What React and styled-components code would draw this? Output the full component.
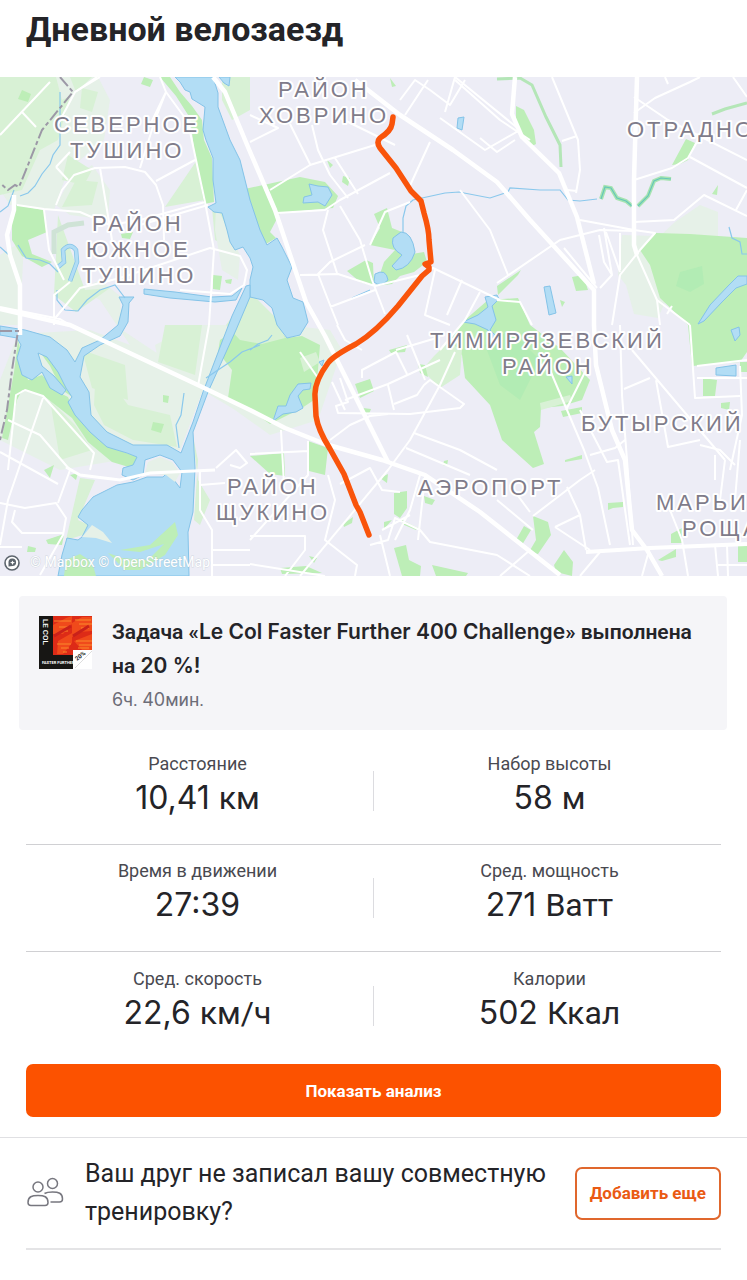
import React from "react";
import styled, { createGlobalStyle } from "styled-components";

const GlobalStyle = createGlobalStyle`
  * {
    box-sizing: border-box;
  }
  body {
    margin: 0;
    background: #fff;
    color: #242428;
    font-family: Roboto, "Noto Sans", sans-serif;
  }
`;

const Page = styled.main`
  display: flex;
  flex-direction: column;
  min-height: 100vh;
`;

const Title = styled.h1`
  margin: 0;
  padding: 7px 26px 26px;
  font-size: 34px;
  line-height: 44px;
  font-weight: 700;
`;

const Map = styled.svg`
  display: block;
  width: 100%;
  height: auto;
  background: #ededf6;

  .park {
    fill: #bdeeb7;
  }
  .green {
    fill: #d8f1d5;
  }
  .pale {
    fill: #e6f1e8;
  }
  .water {
    fill: #b2ddf5;
    stroke: #84c3e8;
    stroke-width: 1;
  }
  .stream {
    fill: none;
    stroke: #8ac8ec;
    stroke-width: 1.2;
  }
  .road {
    fill: none;
    stroke: #fff;
    stroke-width: 2;
    stroke-linejoin: round;
  }
  .highway {
    fill: none;
    stroke: #fff;
    stroke-width: 4.5;
    stroke-linejoin: round;
  }
  .border {
    fill: none;
    stroke: #9c98a6;
    stroke-width: 2;
    stroke-dasharray: 12 3 4 3;
  }
  .track {
    fill: none;
    stroke: #f9540b;
    stroke-width: 5.5;
    stroke-linecap: round;
    stroke-linejoin: round;
  }
`;

const District = styled.text`
  font-family: "Liberation Sans", Arial, sans-serif;
  font-size: 22px;
  letter-spacing: 3px;
  fill: #7f7c8a;
  stroke: #fff;
  stroke-width: 4px;
  stroke-linejoin: round;
  paint-order: stroke;
`;

const Credits = styled.text`
  font-size: 14px;
  fill: #fff;
  stroke: #a5b5c0;
  stroke-width: 1px;
  stroke-opacity: 0.4;
  paint-order: stroke;
`;

const Challenge = styled.section`
  display: flex;
  gap: 20px;
  margin: 20px 20px 0 19px;
  padding: 20px 20px 13px;
  border-radius: 4px;
  background: #f5f5f8;
`;

const Badge = styled.svg`
  flex: none;
  width: 53px;
  height: 53px;
`;

const ChallengeText = styled.div`
  flex: 1;
  margin-top: -1px;
`;

const ChallengeTitle = styled.h2`
  margin: 0;
  font-size: 21px;
  line-height: 34px;
  font-weight: 600;
`;

const Latin = styled.span`
  font-family: Inter, sans-serif;
`;

const ChallengeTime = styled.p`
  margin: 0;
  font-size: 18px;
  line-height: 34px;
  color: #6d6d78;
`;

const Stats = styled.div`
  padding: 8px 26px 0;
`;

const StatRow = styled.div`
  display: grid;
  grid-template-columns: 1fr 1px 1fr;
  column-gap: 4px;
  align-items: center;
  height: 107px;
  border-bottom: ${(props) => (props.$last ? "none" : "1px solid #d0d0d3")};
`;

const StatDivider = styled.div`
  height: 40px;
  background: #dcdce0;
`;

const Stat = styled.div`
  padding-bottom: 10px;
  text-align: center;
`;

const StatLabel = styled.div`
  font-size: 18px;
  line-height: 24px;
  color: #494950;
`;

const StatValue = styled.div`
  font-size: 32px;
  line-height: 44px;
`;

const AnalysisButton = styled.button`
  margin: 5px 26px 20px;
  height: 53px;
  border: none;
  border-radius: 7px;
  background: #fc5200;
  color: #fff;
  font-family: inherit;
  font-size: 17px;
  font-weight: 700;
  cursor: pointer;
`;

const FriendBar = styled.section`
  padding: 0 26px;
  border-top: 1px solid #e0e0e3;
`;

const FriendRow = styled.div`
  display: flex;
  align-items: center;
  height: 112px;
  border-bottom: 2px solid #e4e4e6;
`;

const FriendsIcon = styled.svg`
  flex: none;
  width: 38px;
  height: 32px;
  margin-right: 21px;
  fill: none;
  stroke: #77777f;
  stroke-width: 1.5;
`;

const FriendText = styled.p`
  flex: 1;
  margin: 0;
  font-size: 25px;
  line-height: 38px;
`;

const AddButton = styled.button`
  flex: none;
  height: 53px;
  padding: 0 13px;
  border: 2px solid #e0672d;
  border-radius: 7px;
  background: #fff;
  color: #ea5a13;
  font-family: inherit;
  font-size: 17px;
  font-weight: 700;
  cursor: pointer;
`;

const districts = [
  { x: 278, y: 97, name: "РАЙОН" },
  { x: 259, y: 123, name: "ХОВРИНО" },
  { x: 54, y: 132, name: "СЕВЕРНОЕ" },
  { x: 70, y: 158, name: "ТУШИНО" },
  { x: 92, y: 231, name: "РАЙОН" },
  { x: 86, y: 257, name: "ЮЖНОЕ" },
  { x: 82, y: 283, name: "ТУШИНО" },
  { x: 627, y: 137, name: "ОТРАДНО" },
  { x: 430, y: 348, name: "ТИМИРЯЗЕВСКИЙ" },
  { x: 502, y: 374, name: "РАЙОН" },
  { x: 581, y: 431, name: "БУТЫРСКИЙ" },
  { x: 227, y: 494, name: "РАЙОН" },
  { x: 216, y: 520, name: "ЩУКИНО" },
  { x: 418, y: 495, name: "АЭРОПОРТ" },
  { x: 656, y: 510, name: "МАРЬИ" },
  { x: 682, y: 536, name: "РОЩА" },
];

const stats = [
  [
    { label: "Расстояние", value: "10,41", unit: "км" },
    { label: "Набор высоты", value: "58", unit: "м" },
  ],
  [
    { label: "Время в движении", value: "27:39" },
    { label: "Сред. мощность", value: "271", unit: "Ватт" },
  ],
  [
    { label: "Сред. скорость", value: "22,6", unit: "км/ч" },
    { label: "Калории", value: "502", unit: "Ккал" },
  ],
];

const Parks = () => (
  <g>
    <path className="pale" d="M0 77H98L110 100 104 140 68 170 54 210 10 205 0 190z M70 180L92 165 110 190 108 220 70 215 56 205z" />
    <path className="green" d="M0 77H56L62 100 70 96 58 140 40 150 22 190 0 195z M70 77H92L76 92z M82 88L98 92 92 112 80 108z M68 155L92 170 84 185 62 180z M76 180L98 182 92 205 62 207z" />
    <path className="pale" d="M0 255L24 240 20 325 0 325z M18 334L90 330 130 345 100 300 80 290 100 280 120 296 122 330 205 385 180 450 60 470 0 440V380z" />
    <path className="green" d="M165 207L197 160 205 200z M222 77H250V110L232 120 222 100z M235 250L222 213 212 208 215 240z" />
    <path className="pale" d="M216 205L240 255 238 280 222 270 215 230z M194 325H285L330 330 342 350 318 420 270 435 235 410 202 390 160 370 155 345z" />
    <path className="green" d="M58 215L54 295 76 312 110 288 85 290z M95 385L108 378 128 405 170 415 177 447 133 440 104 425 94 405z M82 350L125 365 128 400 92 388z M165 325L202 325 195 375 158 362z M50 400L75 425 92 450 60 460z" />
    <path className="park" d="M160 77L170 77 180 92 192 106 202 120 204 140 212 158 214 202 204 204 194 148 190 118 176 96z M144 77L153 80 150 87 141 84z M22 90L31 94 28 102 18 99z M16 205L44 210 47 232 28 240 32 254 52 262 42 267 22 256 12 240 12 222z" />
    <path className="park" d="M18 340L28 380 42 375 58 392 68 397 75 414 106 446 138 457 132 468 112 462 88 442 72 418 44 396 22 390 17 400 8 440 2 438 14 372z M40 352L56 364 72 384 71 396 62 390 50 366z M213 275L222 276 220 290 213 289z M225 280L232 279 231 284 226 283z M121 234L133 232 130 239 122 238z" />
    <path className="park" d="M235 330L262 318 276 326 286 338 302 336 320 345 318 370 314 400 302 408 270 424 250 410 228 398 232 370 218 352 220 340z" />
    <path className="green" d="M226 325L250 292 275 317 285 338 262 344 240 340z M300 358L316 352 320 362 304 372z" />
    <path className="park" d="M240 190L268 184 300 177 325 182 338 196 333 208 280 213 270 232 276 238 266 244 258 228z M327 160L333 165 330 168z M343 176L350 178 348 186 342 182z M390 78L396 86 392 87z" />
    <path className="park" d="M347 271L366 260 373 263 374 286 360 282z M374 214L387 208 392 228 402 232 412 254 424 252 427 262 414 272 400 276 392 284 376 286 384 262 395 250 370 245 380 228z M516 106L524 110 534 130 536 144 530 147 516 128z" />
    <path className="park" d="M672 165L686 139 695 143 688 160 680 164z M712 194L718 185 717 195z M572 277L583 275 588 290 576 291z M560 300L565 302 562 307z M497 286L521 270 518 275 498 295z" />
    <path className="pale" d="M675 222L700 205 718 212 718 236 660 236z M655 236L645 250 660 285 666 300 658 318 634 314 626 285 618 275 622 235z" />
    <path className="park" d="M656 233L690 234 747 238V352L740 362 692 366 688 325 660 298 650 265 640 250z M465 320L488 300 518 298 530 325 560 348 590 380 582 400 562 406 541 408 540 427 534 432 544 464 533 468 502 440 490 405 465 378 462 355 448 342z" />
    <path className="green" d="M448 342L462 350 460 375 440 388 422 370 434 356z M540 403L570 395 572 401 541 410z" />
    <path d="M680 272L702 266 704 284 690 292 676 286z M485 345L510 330 540 360 520 400 500 385z" fill="#b2ecb4" />
    <path className="park" d="M561 411L582 407 582 413 563 417z M565 460L582 455 582 459 565 462z M608 503L623 502 623 507 613 508 608 510z M703 378L717 380 715 396 703 396z M721 403L730 402 729 410 721 408z M740 362H747V372H740z" />
    <path className="park" d="M355 384L370 379 374 391 360 398z M363 408L371 409 369 414 364 414z M389 350L407 345 405 352 391 353z M418 364L425 365 428 377 420 373z M444 461L448 460 447 466 443 465z M380 478L388 474 387 483z M308 441L328 448 325 475 309 471z M250 456L284 453 285 476 270 474z" />
    <path className="park" d="M394 493L407 491 407 508 400 518 394 514z M424 496L435 500 432 505 425 503z M384 522L392 520 384 529z M343 524L353 517 352 523 344 527z M402 520L418 528 416 530 402 524z M394 548L406 545 409 560 421 566 420 576 402 576z M432 565L468 573 466 576H436z M280 568L306 566 322 573 282 574z M309 556L317 558 314 563z" />
    <path className="park" d="M516 540L524 526 531 530 522 545z M533 516L548 522 551 535 538 554 529 552 536 540z M554 565L564 550 573 562 572 576 556 572z M671 534L682 528 682 543 671 543z M658 560L676 549 676 557 662 561z M738 545H747V562H738z M44 470L54 465 50 478z M46 540L64 534 62 545 48 544z M28 546L36 548 35 552 27 552z M70 475L78 473 76 480z M163 395L169 396 168 403 163 402z M153 422L164 424 161 433 151 430z" />
    <path className="green" d="M80 478L95 480 78 520 100 530 66 540 75 500z M192 432L198 460 194 520 200 525 210 500 198 480z" />
  </g>
);

const Water = () => (
  <g>
    <path
      className="water"
      d="M175 77L180 82 185 90 190 92 192 99 197 102 205 107 203 130 206 140 213 158 213 180 216 203 208 207 214 212 222 213 227 230 230 242 235 250 243 247 250 258 253 267 250 280 250 297 263 300 272 308 277 325 287 338 300 335 308 322 303 302 293 298 287 280 292 267 282 247 277 238 267 245 260 230 250 200 240 160 230 140 218 107 218 93 213 77z"
    />
    <path className="water" d="M219 77H230L229 86 224 83z" />
    <path
      className="water"
      d="M0 326L25 330 50 337 67 350 75 362 82 348 100 340 118 325 123 305 119 297 134 297 129 303 128 322 120 336 100 345 84 356 80 377 89 392 91 415 107 432 133 445 167 445 181 453 193 422 203 392 222 342 232 316 246 286 250 285 250 297 236 330 208 392 193 432 195 468 193 512 188 532 189 576H58L62 555 67 538 78 540 82 537 88 525 78 517 82 510 93 497 117 485 133 482 147 477 163 477 168 472 180 488 182 472 173 460 160 455 145 460 143 475 133 480 122 475 123 468 133 465 137 457 127 453 107 447 90 432 75 415 68 402 72 397 66 388 58 372 47 357 38 353 42 366 54 376 66 390 62 395 50 388 42 372 32 380 22 375 17 358 21 345 17 338 0 335z"
    />
    <path className="water" d="M144 289L175 292 212 297 232 296 242 288 236 300 215 302 170 298 144 294z" />
    <path className="water" d="M401 232Q412 232 415 252Q410 268 396 270L392 266 402 255Q390 248 393 238z M375 274Q386 268 388 280Q380 288 374 282z" />
    <path className="water" d="M309 184L318 186 328 187 332 195 325 206 318 202 303 203 304 197 312 195z" />
    <path className="water" d="M485 297L497 295 499 299 492 306 496 320 490 330 497 337 490 340 488 330 475 324 463 322 478 315 488 307z M544 287L550 286 556 313 549 315z M458 118L464 117 462 130 457 128z" />
    <path className="water" d="M747 276L738 276 728 286 710 305 698 324 704 321 722 302 736 288 747 284z M731 330L739 327 740 335 735 341z M716 368L736 365 736 376 716 375z M566 377L572 376 572 384z" />
    <path className="water" d="M311 383L298 384 290 395 286 406 278 406 273 421 283 414 296 412 303 408 298 396 303 390 310 389z M319 362L324 360 322 366z" />
    <path className="park" d="M120 550L150 545 175 522 178 535 165 555 140 570 125 570 108 553 122 558 148 560 164 544 140 552z M66 560L80 554 92 562 96 576H64z" />
    <path className="pale" d="M145 473L148 462 160 457 172 462 180 473 175 482 166 475z M82 537L92 525 103 532 112 543 96 538z" />
    <path className="stream" d="M60 92L60 145 53 155 50 164 42 174 35 186 28 193 20 196M0 212L8 206 14 190" />
    <path className="stream" d="M0 247L9 255M403 232L403 218 406 206 413 200 445 193 459 192 490 198 508 192 510 188 540 190 560 190 568 200 580 201 597 199" />
    <path className="stream" d="M18 245L26 258 40 260 50 264 58 272M57 290L57 300 65 310 78 311 87 300 100 290 115 285 125 298" />
    <path d="M58 267L64 262 63 250Q70 242 76 250L77 262 70 281" fill="none" stroke="#84c3e8" strokeWidth="4.500" />
    <path d="M58 267L64 262 63 250Q70 242 76 250L77 262 70 281" fill="none" stroke="#b2ddf5" strokeWidth="3" />
    <path className="stream" d="M250 350L258 344 268 340 272 335M206 378L230 362 242 352 260 345M184 393L181 415 176 425 179 448M729 227L732 238 740 242 742 254H747M352 298L370 290" />
    <path d="M601 199L605 187 611 188 617 198 626 201 632 206M638 206L648 196 654 181 661 178 671 179" fill="none" stroke="#a6e4b0" strokeWidth="4" />
    <path d="M601 199L605 187 611 188 617 198 626 201 632 206M638 206L648 196 654 181 661 178 671 179" fill="none" stroke="#66c6ba" strokeWidth="1.2" />
    <path d="M497 79L520 78 532 85 546 117 560 145 561 167M712 114L725 109 747 103" fill="none" stroke="#b4e6b7" strokeWidth="3" />
    <path d="M54 254V232L68 225 84 223" fill="none" stroke="#cfe3d6" strokeWidth="5" />
  </g>
);

const Roads = () => (
  <g>
    <path
      className="road"
      d="M0 135L50 82M22 112L36 127M97 77L75 92 55 130M160 77L166 92 150 125M166 92L155 120 140 168M56 205L62 190 74 175 95 168 125 167 145 172 156 185 163 205 164 240M56 167L68 180M56 167L70 152M100 168L112 240M156 181L195 160M17 205L44 209 80 212 110 225 140 220 205 202M140 225L208 205M44 210L49 250 64 280M54 325V295L70 282M52 322L80 288 120 278 210 248 240 256 247 270 244 285 230 294 180 290M205 202L214 250 209 325M0 307L60 319 70 325M166 92L188 122 196 160 205 202"
    />
    <path className="road" d="M209 325L198 386M8 470L16 395 25 390 43 396 94 453 90 470M43 398L8 500 0 545M8 420L40 435 70 470 58 503M0 452L58 484M0 503L25 508 56 503 66 518 63 535 40 575M15 510L12 522 22 533H64M0 547H22M216 468L236 450 247 463 240 468 230 465M200 471V510L212 530V576M213 550H250M213 565H250M200 485L225 483" />
    <path className="highway" d="M14 195L14 210 7 235 10 255 20 285 20 325V335M0 309L70 325 200 386 250 410 285 428 325 444 382 460 425 475 480 512 560 575" />
    <path d="M66 467L80 475 120 480 150 473 215 470" fill="none" stroke="#fff" strokeWidth="3" />
    <path className="highway" d="M213 77L225 92 248 147 275 210 306 302 325 336 362 410 388 462M355 80L400 115 453 150 497 182 530 220 594 290V325L596 365 612 430 625 460 632 530 647 550 662 576" />
    <path className="highway" d="M515 77L512 114 522 137 559 173 577 217 594 284M637 77L634 180 634 245 637 255" />
    <path className="road" d="M75 92L100 77M250 142L278 128 250 115M290 124L310 164M312 125L318 150 330 175 348 198M270 190L310 165 375 145M335 158L358 194M277 213L325 210 340 200 390 173M328 210L323 230 337 273M340 206L360 240 372 280 385 314M365 245L330 262 318 274 332 310 338 325M300 275L338 274 375 286 420 275 433 268 500 300M370 245L385 212 410 202M330 307L375 290M408 190L430 142M395 145L340 118M564 248L597 288" />
    <path className="road" d="M400 100L415 80 430 90 450 105 465 80M405 115L428 80M445 112L455 77 520 130 485 150 440 118M455 80L500 120 530 140M552 77L578 140 580 170 576 193M562 141L577 136M567 190L577 191M515 140L497 152 480 138M634 97L668 120 747 160M634 113L655 98 690 82 700 77M668 84L665 77M733 77L747 97M634 180L672 168 688 158 698 140M690 157L747 188M634 222L674 220 704 195 747 216M736 210L747 190" />
    <path className="road" d="M580 220L634 230 655 233 640 250 620 275 612 325M497 283L560 240 600 230 635 231M604 228L612 275 600 288M599 235L604 262 612 275M606 232L620 272M620 233V270M637 255L657 300 660 325M657 300L690 325M667 314L672 306M460 190L490 230 508 275M497 300L520 302 532 325M435 270L425 315 450 325M462 280L447 315M480 292L465 320 440 350" />
    <path className="road" d="M337 325L345 340 362 350M332 382L345 410M340 378L348 402 336 406 338 413 410 414 460 408 464 404 430 380 424 385 417 395 394 404M345 400L388 384 440 360M362 378L362 370 396 352 407 374M388 385L394 410M396 350L440 337M407 335L418 362 425 380M455 352L440 385 410 440 388 470 300 576M414 433L460 450 497 470M406 448L470 475M330 440L350 425 370 416 388 414M300 352L318 378" />
    <path className="road" d="M281 430L284 485M250 454L308 451M308 441L308 475 250 540M340 484L370 468 382 490 400 492M328 475L335 500 325 540 357 565 355 576M250 536H305V550L285 576M370 545L388 540 395 518 420 530 430 542 497 555 530 576M420 475L410 510 395 540M380 535L390 576M425 477L418 540M250 564L325 576M382 530L410 515" />
    <path className="road" d="M550 370L584 450 598 488 610 545M620 325L622 395 627 460 633 545M624 389L650 378M632 350L725 460M656 380L668 447 700 440M590 455L615 448 625 440M580 410L607 462 618 460 630 545M690 325L695 398 740 396M697 378H747M697 366L747 360M740 366L742 415 730 470M566 410L586 370" />
    <path className="road" d="M533 516L580 480 595 470M567 487L580 515 586 550M555 527L580 515M555 527L590 550M497 500L533 530M510 485L530 512M500 576L530 550M580 576L600 552M650 547L642 576M725 460L720 500M715 455V480M740 440L735 500M670 510L682 540 688 576M715 545L718 576M727 545L728 576M718 565H747M700 445L720 450 735 465" />
    <path d="M586 552L650 548 747 544" fill="none" stroke="#fff" strokeWidth="4" />
    <path className="border" d="M60 77L73 92 42 130 28 165 19 187 15 185 8 190 0 183M0 331H18L12 370 7 410 0 440" />
  </g>
);

const RideMap = () => (
  <Map viewBox="0 77 747 499" role="img" aria-label="Карта маршрута">
    <Parks />
    <Water />
    <Roads />
    {districts.map((el, index) => (
      <District key={index} x={el.x} y={el.y}>
        {el.name}
      </District>
    ))}
    <path
      className="track"
      d="M393 117L392 124Q391 131 380 138Q376 142 380 148L396 168 411 191 421 201 424 213Q429 230 429 240L431 262 425 264 429 267 429 270 422 276 398 306Q376 332 356 344Q333 356 328 363Q314 382 315 396L316 416Q318 430 330 449L344 474 356 505 360 512 369 535"
    />
    <circle cx="12" cy="563" r="7" fill="#fff" stroke="#5d656d" strokeWidth="1.6" />
    <path d="M8.500 566.500V562.500A3.800 3.800 0 1 1 12.500 566z" fill="#5d656d" />
    <path d="M12.500 560.500L13.300 562 15 562.500 13.300 563.300 12.500 565 11.700 563.300 10 562.500 11.700 562z" fill="#fff" />
    <Credits x="30" y="567">
      © Mapbox © OpenStreetMap
    </Credits>
  </Map>
);

const ChallengeBadge = () => (
  <Badge viewBox="0 0 53 53" aria-label="Le Col">
    <rect width="53" height="53" fill="#171614" />
    <rect x="14" width="39" height="39" fill="#dd2b17" />
    <path d="M14 9L27 2 33 0V8L24 18H14z M33 7L43 1H53V15L40 16 33 21z M19 25L33 17V27L24 38H18z M35 25L53 18V34H43z" fill="#f04a1b" />
    <path d="M15 5H32M20 11H31M22 15H29M18 28H32M22 32H30M24 36H28M36 4H52M40 8H53M42 12H50M37 25H53M40 29H53M39 32H50" stroke="#fa8a2c" strokeWidth="1.200" />
    <path d="M15 20L32 10M34 20L50 10" stroke="#c9211a" strokeWidth="3" />
    <path d="M34 34H53V53H34z" fill="#fff" />
    <path d="M36 52L53 35" stroke="#ddd" strokeWidth="1" />
    <text transform="translate(4 3) rotate(90)" fontSize="8" fontWeight="500" fill="#fff">
      LE COL
    </text>
    <text x="3" y="48" fontSize="4" fontWeight="700" fill="#fff">
      FASTER FURTHER
    </text>
    <text transform="translate(38 45) rotate(-38)" fontSize="6" fontWeight="700" fill="#222">
      20%
    </text>
  </Badge>
);

const StatItem = ({ label, value, unit }) => (
  <Stat>
    <StatLabel>{label}</StatLabel>
    <StatValue>
      <Latin>
        {value}
        {unit ? " " : ""}
      </Latin>
      {unit}
    </StatValue>
  </Stat>
);

const App = () => {
  return (
    <>
      <GlobalStyle />
      <Page>
        <Title>Дневной велозаезд</Title>
        <RideMap />
        <Challenge>
          <ChallengeBadge />
          <ChallengeText>
            <ChallengeTitle>
              Задача «<Latin>Le Col Faster Further 400 Challenge</Latin>» выполнена на&nbsp;
              <Latin>20&nbsp;%!</Latin>
            </ChallengeTitle>
            <ChallengeTime>
              <Latin>6</Latin>ч. <Latin>40</Latin>мин.
            </ChallengeTime>
          </ChallengeText>
        </Challenge>
        <Stats>
          {stats.map(([left, right], index) => (
            <StatRow key={index} $last={index === stats.length - 1}>
              <StatItem {...left} />
              <StatDivider />
              <StatItem {...right} />
            </StatRow>
          ))}
        </Stats>
        <AnalysisButton type="button">Показать анализ</AnalysisButton>
        <FriendBar>
          <FriendRow>
            <FriendsIcon viewBox="0 0 38 32" aria-hidden="true">
              <circle cx="12" cy="10" r="5" />
              <circle cx="26.500" cy="6.500" r="5" />
              <path d="M5 28.500H19C21.500 28.500 22 27.500 22 25.500 22 19.500 18 18.500 12 18.500S2 19.500 2 25.500C2 27.500 2.500 28.500 5 28.500z" />
              <path d="M18.500 16.500C20.500 15.300 23 15 26.500 15 32.500 15 36.500 16 36.500 22 36.500 24 36 25 33.500 25H24.500" />
            </FriendsIcon>
            <FriendText>Ваш друг не записал вашу совместную тренировку?</FriendText>
            <AddButton type="button">Добавить еще</AddButton>
          </FriendRow>
        </FriendBar>
      </Page>
    </>
  );
};

export default App;
